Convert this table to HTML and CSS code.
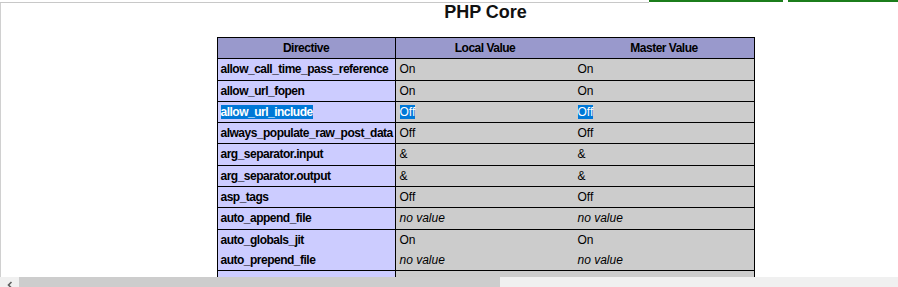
FILE: index.html
```html
<!DOCTYPE html>
<html lang="en">
<head>
    <meta charset="UTF-8">
    <title>phpinfo()</title>
    <link rel="stylesheet" href="styles.css">
</head>
<body>

    <!-- strip left over from the window above -->
    <div class="topbar">
        <div class="topbar-line"></div>
        <div class="topbar-tab"></div>
        <div class="topbar-tab wide"></div>
    </div>

    <div class="viewport">
        <div class="page">
            <h2>PHP Core</h2>
            <table class="info">
                <tr class="h">
                    <th class="col-e">Directive</th>
                    <th>Local Value</th>
                    <th>Master Value</th>
                </tr>
                <tr>
                    <td class="e">allow_call_time_pass_reference</td>
                    <td class="v">On</td>
                    <td class="v">On</td>
                </tr>
                <tr>
                    <td class="e">allow_url_fopen</td>
                    <td class="v">On</td>
                    <td class="v">On</td>
                </tr>
                <tr>
                    <td class="e"><span class="sel">allow_url_include</span></td>
                    <td class="v"><span class="sel">Off</span></td>
                    <td class="v"><span class="sel">Off</span></td>
                </tr>
                <tr>
                    <td class="e">always_populate_raw_post_data</td>
                    <td class="v">Off</td>
                    <td class="v">Off</td>
                </tr>
                <tr>
                    <td class="e">arg_separator.input</td>
                    <td class="v">&amp;</td>
                    <td class="v">&amp;</td>
                </tr>
                <tr>
                    <td class="e">arg_separator.output</td>
                    <td class="v">&amp;</td>
                    <td class="v">&amp;</td>
                </tr>
                <tr>
                    <td class="e">asp_tags</td>
                    <td class="v">Off</td>
                    <td class="v">Off</td>
                </tr>
                <tr>
                    <td class="e">auto_append_file</td>
                    <td class="v"><i>no value</i></td>
                    <td class="v"><i>no value</i></td>
                </tr>
                <tr>
                    <td class="e">auto_globals_jit<br>auto_prepend_file</td>
                    <td class="v">On<br><i>no value</i></td>
                    <td class="v">On<br><i>no value</i></td>
                </tr>
                <tr>
                    <td class="e">&nbsp;</td>
                    <td class="v">&nbsp;</td>
                    <td class="v">&nbsp;</td>
                </tr>
            </table>
        </div>
    </div>

    <!-- horizontal scrollbar -->
    <div class="hscroll">
        <div class="hscroll-btn">
            <svg width="8" height="8" viewBox="0 0 8 8"><path d="M5.5 1 L2.5 4 L5.5 7" fill="none" stroke="#606060" stroke-width="1.6"/></svg>
        </div>
        <div class="hscroll-thumb"></div>
    </div>

</body>
</html>
```

FILE: styles.css
```css
html, body {
    margin: 0;
    padding: 0;
}
body {
    width: 898px;
    height: 287px;
    overflow: hidden;
    display: flex;
    flex-direction: column;
    background-color: #fff;
    font-family: "Liberation Sans", Arial, sans-serif;
    font-size: 12px;
    color: #000;
}
.topbar {
    display: flex;
    height: 3px;
    flex: 0 0 3px;
}
.topbar-line {
    width: 649px;
    height: 1px;
    margin-top: 1px;
    border-bottom: 1px solid #c8c8c8;
}
.topbar-tab {
    width: 130px;
    height: 1px;
    border: 2px solid #1b7d1b;
    border-top: none;
    margin-top: -1px;
}
.topbar-tab.wide {
    flex: 1;
    margin-left: 5px;
    margin-right: -4px;
}
.viewport {
    flex: 1;
    overflow: hidden;
    border-left: 1px solid #d0d0d0;
}
.page {
    width: 969px;
    text-align: center;
}
h2 {
    margin: 0 0 16px 0;
    font-size: 18px;
    line-height: 18px;
    font-weight: bold;
    color: #111;
}
.info {
    margin: 0 auto;
    width: 538px;
    table-layout: fixed;
    border-collapse: collapse;
    border: 1px solid #000;
    text-align: left;
}
.info th, .info td {
    padding: 0 3px;
    line-height: 20.3px;
    border-bottom: 1px solid #000;
    vertical-align: top;
    white-space: nowrap;
    overflow: hidden;
}
.h th {
    background-color: #9999cc;
    font-weight: bold;
    text-align: center;
    letter-spacing: -0.5px;
}
.col-e {
    width: 171px;
    border-right: 1px solid #000;
}
.e {
    background-color: #ccccff;
    font-weight: bold;
    letter-spacing: -0.5px;
    border-right: 1px solid #000;
}
.v {
    background-color: #cccccc;
}
.v:nth-child(2) {
    padding-left: 4px;
}
.sel {
    background-color: #0078d7;
    color: #fff;
}
.hscroll {
    flex: 0 0 10px;
    display: flex;
    background-color: #f0f0f0;
}
.hscroll-btn {
    width: 19px;
    display: flex;
    align-items: flex-end;
    justify-content: center;
}
.hscroll-btn svg {
    margin-bottom: -2px;
}
.hscroll-thumb {
    width: 481px;
    background-color: #cdcdcd;
}
```
